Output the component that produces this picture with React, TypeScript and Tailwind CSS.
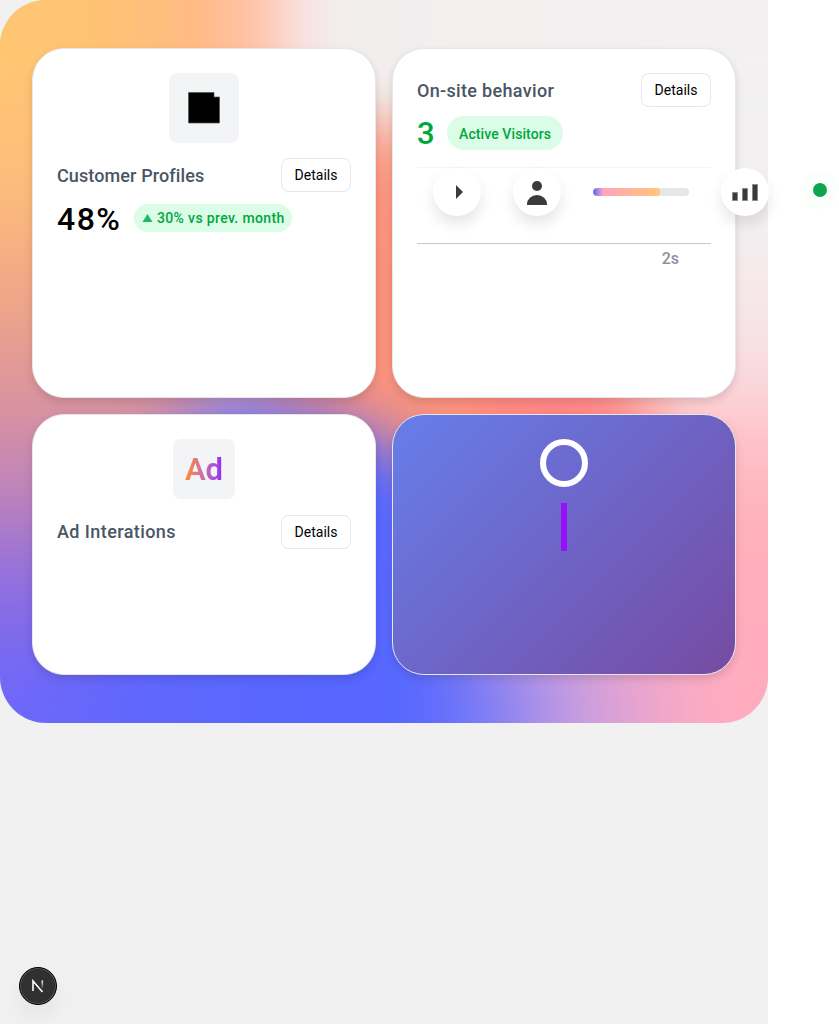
import React from "react";

function Details() {
  return (
    <button className="h-[34px] w-[70px] shrink-0 rounded-lg border border-gray-200 bg-white text-center text-sm text-black">
      Details
    </button>
  );
}

function Title({ children, className }: { children: React.ReactNode; className: string }) {
  return <h2 className={`pt-px text-lg leading-7 font-medium whitespace-nowrap text-gray-600 ${className}`}>{children}</h2>;
}

const card = "overflow-visible rounded-[32px] border border-gray-200 bg-white p-6 shadow-[0_4px_8px_rgba(0,0,0,0.12)]";
const disc = "flex size-12 shrink-0 items-center justify-center rounded-full bg-white shadow-[0_8px_14px_rgba(0,0,0,0.1)]";

function MeshBackground() {
  return (
    <div className="absolute inset-0 -z-10 overflow-hidden rounded-[46px] rounded-tr-none bg-[#f2f0f1]">
      <svg className="size-full" viewBox="0 0 768 723" aria-hidden="true">
        <defs>
          <filter id="mesh" filterUnits="userSpaceOnUse" x="-300" y="-300" width="1400" height="1400" colorInterpolationFilters="sRGB">
            <feGaussianBlur stdDeviation="30" />
          </filter>
          <filter id="soft" filterUnits="userSpaceOnUse" x="-200" y="-200" width="1200" height="500" colorInterpolationFilters="sRGB">
            <feGaussianBlur stdDeviation="14" />
          </filter>
          <linearGradient id="left" gradientUnits="userSpaceOnUse" x1="0" y1="0" x2="0" y2="723">
            <stop offset="0" stopColor="#ffc774" />
            <stop offset=".22" stopColor="#ffc078" />
            <stop offset=".38" stopColor="#f3aa84" />
            <stop offset=".53" stopColor="#df969a" />
            <stop offset=".68" stopColor="#bf84b9" />
            <stop offset=".82" stopColor="#8a6be4" />
            <stop offset="1" stopColor="#7068f8" />
          </linearGradient>
          <linearGradient id="right" gradientUnits="userSpaceOnUse" x1="0" y1="0" x2="0" y2="723">
            <stop offset=".3" stopColor="#f2f0f1" />
            <stop offset=".5" stopColor="#f9dfe2" />
            <stop offset=".6" stopColor="#ffc3c9" />
            <stop offset=".72" stopColor="#ffb0ba" />
            <stop offset="1" stopColor="#ffabc0" />
          </linearGradient>
          <linearGradient id="top" gradientUnits="userSpaceOnUse" x1="0" y1="0" x2="768" y2="0">
            <stop offset="0" stopColor="#ffc672" />
            <stop offset=".14" stopColor="#ffc274" />
            <stop offset=".26" stopColor="#ffb985" />
            <stop offset=".34" stopColor="#ffc5ad" />
            <stop offset=".385" stopColor="#f9dfdc" />
            <stop offset=".44" stopColor="#f2eeee" />
            <stop offset="1" stopColor="#f2f0f1" />
          </linearGradient>
          <linearGradient id="bottom" gradientUnits="userSpaceOnUse" x1="0" y1="0" x2="768" y2="0">
            <stop offset="0" stopColor="#7068f8" />
            <stop offset=".22" stopColor="#5d67fe" />
            <stop offset=".54" stopColor="#5567ff" />
            <stop offset=".63" stopColor="#7c7cf5" />
            <stop offset=".73" stopColor="#bd9ae5" />
            <stop offset=".82" stopColor="#e5a4d1" />
            <stop offset=".92" stopColor="#ffabc0" />
          </linearGradient>
        </defs>
        <g filter="url(#mesh)">
          <path d="M400-150H950V900H400Z" fill="url(#right)" />
          <path d="M250 100L420 130 470 290 580 360 655 390 650 480 510 500 250 400Z" fill="#fb937c" />
          <path d="M490 350L610 350 650 420 600 470 490 460Z" fill="#ff8585" />
          <path d="M-150-150H230V520H150V900H-150Z" fill="url(#left)" />
          <path d="M165 440L240 395 345 420 435 470 460 640H780V900H-150V690L110 640Z" fill="url(#bottom)" />
          <path d="M720 300H950V900H710Z" fill="url(#right)" />
        </g>
        <path d="M-60-60H840V85H-60Z" fill="url(#top)" filter="url(#soft)" />
      </svg>
    </div>
  );
}

export default function App() {
  return (
    <div className="h-[1024px] w-full overflow-hidden bg-white font-['Roboto',sans-serif]">
      <main className="relative h-full w-[768px] bg-[#f1f1f1]">
        <section className="relative isolate h-[723px] w-[768px]">
          <MeshBackground />
          <div className="grid grid-cols-[344px_344px] grid-rows-[349.5px_261.5px] gap-4 px-8 pt-12">
            <article className={card}>
              <div className="mx-auto flex size-[70px] items-center justify-center rounded-lg bg-gray-100">
                <svg width="32" height="32" viewBox="0 0 32 32">
                  <path d="M.5.5H26V5H31.5V31H.5Z" fill="#000" stroke="#555" strokeWidth=".7" />
                </svg>
              </div>
              <div className="mt-[15px] flex items-center justify-between"><Title className="tracking-[0.006em]">Customer Profiles</Title><Details /></div>
              <div className="mt-2 flex items-center gap-3">
                <span className="w-[65px] pt-0.5 text-[32px] leading-[34px] font-medium tracking-[0.045em]">48%</span>
                <span className="flex h-7 w-[158px] items-center gap-1 rounded-full bg-green-100 pl-2 text-sm font-medium tracking-[0.025em] whitespace-nowrap text-green-600">
                  <svg width="11" height="10" viewBox="0 0 11 10" className="shrink-0"><path d="M5.5 1L10.5 9H.5Z" fill="#1bbb62" /></svg>
                  30% vs prev. month
                </span>
              </div>
            </article>
            <article className={card}>
              <div className="flex items-center justify-between"><Title className="tracking-[0.018em]">On-site behavior</Title><Details /></div>
              <div className="mt-2 flex items-center gap-3">
                <span className="w-[18px] pt-0.5 text-[31px] leading-[34px] font-medium text-green-600">3</span>
                <span className="flex h-[34px] w-[116px] items-center rounded-full bg-green-100 pt-0.5 pl-3 text-sm font-medium tracking-[0.007em] whitespace-nowrap text-green-600">Active Visitors</span>
              </div>
              <div className="mt-4 flex h-[77px] w-[294px] items-start border-t border-b border-t-gray-100 border-b-[#c8c8c8]">
                <div className="flex items-center gap-8 pl-4">
                  <div className={disc}><svg width="24" height="24" viewBox="0 0 24 24"><path d="M11 5v14l7-7z" fill="#3b3b3b" /></svg></div>
                  <div className={disc}><svg width="22" height="26" viewBox="0 0 22 26"><circle cx="11" cy="7" r="5" fill="#3b3b3b" /><path d="M1 26v-1a10 9 0 0 1 20 0v1z" fill="#3b3b3b" /></svg></div>
                  <div className="h-2 w-24 shrink-0 overflow-hidden rounded-full bg-gray-200"><div className="h-full w-[67px] rounded-full bg-[linear-gradient(90deg,#5568ff_0%,#ffa5bd_15%,#ffc875_100%)]" /></div>
                  <div className={disc}><svg width="28" height="20" viewBox="0 0 28 20"><path d="M1.5 10.5h5v8h-5zM11.5 6.5h5v12h-5zM21.5 2.5h5v16h-5z" fill="#3b3b3b" stroke="#888" /></svg></div>
                  <div className="mb-1 flex size-[38px] shrink-0 items-center justify-center rounded-full bg-[#fbfffc]"><div className="size-3.5 rounded-full bg-[#0ca64e]" /></div>
                </div>
              </div>
              <div className="pt-[3px] pr-8 text-right text-base leading-6 font-medium text-[#8c91a0]">2s</div>
            </article>
            <article className={card}>
              <div className="mx-auto flex h-[60px] w-[62px] items-center justify-center rounded-lg bg-gray-100 pt-0.5">
                <span className="bg-gradient-to-r from-orange-400 to-purple-600 bg-clip-text text-[31px] leading-9 font-semibold text-transparent">Ad</span>
              </div>
              <div className="mt-4 flex items-center justify-between"><Title className="tracking-[0.023em]">Ad Interations</Title><Details /></div>
            </article>
            <article className="flex flex-col items-center rounded-[32px] border border-gray-200 bg-[linear-gradient(135deg,#667eea,#764ba2)] p-6 shadow-[0_4px_8px_rgba(0,0,0,0.12)]">
              <div className="size-12 rounded-full border-[6px] border-white" />
              <div className="mt-4 h-12 w-1.5 bg-[#9810fa]" />
            </article>
          </div>
        </section>
        <div className="absolute top-[967px] left-[19px] flex size-[38px] items-center justify-center rounded-full border border-black bg-[#303030] shadow-[inset_0_0_0_1px_#555,0_12px_24px_rgba(0,0,0,0.06)]">
          <svg width="14" height="14" viewBox="0 0 14 14" fill="none">
            <defs><linearGradient id="stem" x1="0" y1="0" x2="0" y2="1"><stop stopColor="#fff" /><stop offset="1" stopColor="#fff" stopOpacity="0" /></linearGradient></defs>
            <path d="M2 12V2L11.5 13" stroke="#fff" strokeWidth="1.6" /><path d="M10.5 1.5h1.6V10h-1.6z" fill="url(#stem)" />
          </svg>
        </div>
      </main>
    </div>
  );
}
